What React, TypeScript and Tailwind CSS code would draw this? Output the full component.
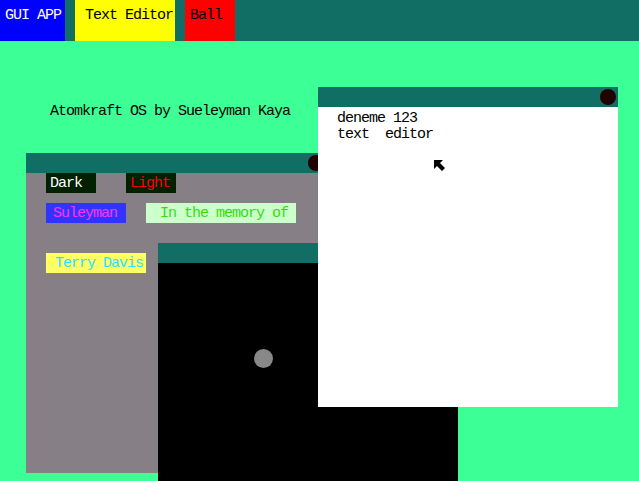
import React from "react";

const font = { fontFamily: '"Liberation Mono", "DejaVu Sans Mono", monospace' };

function TaskButton({ label, className }: { label: string; className: string }) {
	return (
		<div className={`flex h-full items-start pt-[8px] ${className}`}>
			<span className="whitespace-pre">{label}</span>
		</div>
	);
}

function Window({
	className,
	bodyClass,
	children,
	closeButton = true,
}: {
	className: string;
	bodyClass: string;
	children?: React.ReactNode;
	closeButton?: boolean;
}) {
	return (
		<div className={`absolute flex w-[300px] flex-col ${className}`}>
			<div className="flex h-[20px] shrink-0 items-center justify-end bg-[#116e64] pr-[2px]">
				{closeButton && <div className="h-[16px] w-[16px] rounded-full bg-[#210000]" />}
			</div>
			<div className={`relative flex-1 ${bodyClass}`}>{children}</div>
		</div>
	);
}

export default function App() {
	return (
		<div
			className="relative h-[481px] w-[639px] overflow-hidden bg-[#3cff96] text-[15px] leading-[16px] tracking-[-1px]"
			style={font}
		>
			{/* taskbar */}
			<div className="flex h-[41px] gap-[10px] bg-[#116e64]">
				<TaskButton label="GUI APP" className="w-[65px] bg-[#0000ff] pl-[5px] text-white" />
				<TaskButton label="Text Editor" className="w-[100px] bg-[#ffff00] pl-[10px] text-black" />
				<TaskButton label="Ball" className="w-[50px] bg-[#ff0000] pl-[5px] text-black" />
			</div>

			<div className="ml-[50px] mt-[63px] whitespace-pre text-black">Atomkraft OS by Sueleyman Kaya</div>

			{/* GUI app window */}
			<Window className="left-[26px] top-[153px] h-[320px]" bodyClass="bg-[#867f86]">
				<div className="flex flex-col gap-[10px] pl-[20px]">
					<div className="flex gap-[30px]">
						<div className="flex h-[20px] w-[50px] items-center bg-[#002000] pl-[4px] pt-[2px] text-white">Dark</div>
						<div className="flex h-[20px] w-[50px] items-center bg-[#002000] pl-[4px] pt-[2px] text-[#ff0000]">Light</div>
					</div>
					<div className="flex gap-[20px]">
						<div className="flex h-[20px] w-[80px] items-center bg-[#3333ff] pl-[7px] pt-[2px] text-[#ff33ff]">Suleyman</div>
						<div className="flex h-[20px] w-[150px] items-center whitespace-pre bg-[#ccffcc] pl-[6px] pt-[2px] text-[#33dd11]"> In the memory of</div>
					</div>
					<div className="mt-[20px] flex h-[20px] w-[100px] items-center bg-[#ffff66] pl-[9px] pt-[2px] text-[#33ddff]">Terry Davis</div>
				</div>
			</Window>

			{/* ball window */}
			<Window className="left-[158px] top-[243px] h-[260px]" bodyClass="bg-black" closeButton={false}>
				<div className="absolute left-[96px] top-[86px] h-[19px] w-[19px] rounded-full bg-[#888888]" />
			</Window>

			{/* text editor window */}
			<Window className="left-[318px] top-[87px] h-[320px]" bodyClass="bg-white">
				<div className="whitespace-pre pl-[19px] pt-[4px] text-black">
					<div>deneme 123</div>
					<div>text  editor</div>
				</div>
			</Window>

			{/* mouse cursor */}
			<svg className="absolute left-[434px] top-[160px]" width="11" height="12" viewBox="0 0 11 12">
				<polygon points="0,0 9,0 6,3 11,8 8,11 3,6 0,9" fill="#000" />
			</svg>
		</div>
	);
}
